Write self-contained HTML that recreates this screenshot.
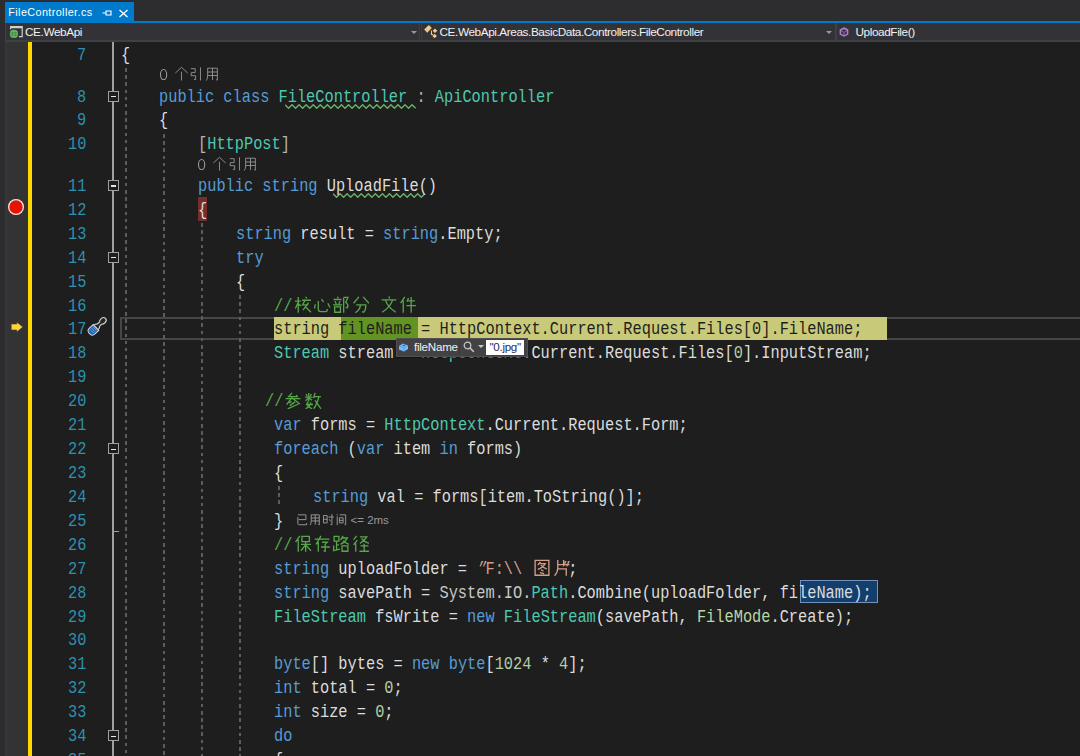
<!DOCTYPE html>
<html><head><meta charset="utf-8"><title>FileController.cs</title><style>
html,body{margin:0;padding:0}
body{width:1080px;height:756px;overflow:hidden;position:relative;background:#2d2d30}
.abs{position:absolute}
.code{font-family:"Liberation Mono",monospace;font-size:16px;line-height:20px;height:20px;white-space:pre;transform-origin:0 0;transform:scale(0.9575,1.13);color:#dcdcdc}
.guide{width:2px;background:repeating-linear-gradient(to bottom,#5c5c5c 0,#5c5c5c 3.6px,transparent 3.6px,transparent 7.176px)}
.obox{width:11px;height:11px;box-sizing:border-box;border:1.2px solid #a0a0a0;background:#1e1e1e}
.obox div{position:absolute;left:1.8px;top:4.3px;width:5.2px;height:1.2px;background:#e6e6e6}
.tabt{font-family:"Liberation Sans",sans-serif;font-size:10.8px;line-height:14px;color:#fff;white-space:pre;letter-spacing:0.4px}
.navt{font-family:"Liberation Sans",sans-serif;font-size:11.8px;line-height:14px;color:#f1f1f1;white-space:pre;letter-spacing:-0.42px}
.lens{font-family:"Liberation Mono",monospace;font-size:12px;line-height:14px;color:#999;white-space:pre;transform-origin:0 0;transform:scale(1.0,1.3)}
.tipt{font-family:"Liberation Sans",sans-serif;font-size:11.5px;line-height:14px;color:#999;white-space:pre}
.tipn{font-family:"Liberation Sans",sans-serif;font-size:11.6px;line-height:14px;color:#f1f1f1;white-space:pre;letter-spacing:-0.25px}
.tipv{font-family:"Liberation Sans",sans-serif;font-size:11.6px;line-height:14px;color:#2a2a60;white-space:pre;letter-spacing:-0.3px}
</style></head>
<body>
<div class="abs" style="left:0;top:0;width:1080px;height:42px;background:#2d2d30"></div>
<div class="abs" style="left:5px;top:2px;width:129px;height:20px;background:#007acc"></div>
<div class="abs" style="left:5px;top:21px;width:1075px;height:2px;background:#007acc"></div>
<div class="abs tabt" style="left:8.3px;top:5.2px">FileController.cs</div>
<svg class="abs" style="left:101px;top:8px" width="12" height="10" viewBox="0 0 12 10"><path d="M1.5 5H5M5 2.5V7.5M5 3H10V7H5" fill="none" stroke="#fff" stroke-width="1.1"/></svg>
<svg class="abs" style="left:118px;top:8.5px" width="11" height="9" viewBox="0 0 11 9"><path d="M1.5 1L9.5 8M9.5 1L1.5 8" stroke="#fff" stroke-width="1.3"/></svg>
<div class="abs" style="left:5px;top:23px;width:413px;height:17px;background:#333337;border-left:1px solid #3f3f46;border-right:1px solid #3f3f46"></div>
<div class="abs" style="left:421px;top:23px;width:413px;height:17px;background:#333337;border-left:1px solid #3f3f46;border-right:1px solid #3f3f46"></div>
<div class="abs" style="left:836px;top:23px;width:244px;height:17px;background:#333337;border-left:1px solid #3f3f46"></div>
<div class="abs" style="left:5px;top:40px;width:1075px;height:2px;background:#3f3f46"></div>
<svg class="abs" style="left:410.5px;top:31px" width="6" height="3" viewBox="0 0 6 3"><path d="M0 0H6L3 3Z" fill="#999"/></svg>
<svg class="abs" style="left:826px;top:31px" width="6" height="3" viewBox="0 0 6 3"><path d="M0 0H6L3 3Z" fill="#999"/></svg>
<svg class="abs" style="left:9px;top:25px" width="15" height="14" viewBox="0 0 15 14"><path d="M1 1.1H13.8V12.2H9.9V11H12.6V3.3H2.3V4.2H1Z" fill="#cfcfcf"/><circle cx="4.9" cy="8.9" r="4.1" fill="#6cc46c"/><path d="M1.2 7.9H8.6M1.2 10H8.6" stroke="#2f6f2f" stroke-width="0.7"/><ellipse cx="4.9" cy="8.9" rx="1.6" ry="4" fill="none" stroke="#3d8a3d" stroke-width="0.6"/></svg>
<div class="abs navt" style="left:25px;top:25px">CE.WebApi</div>
<svg class="abs" style="left:420px;top:22px" width="20" height="18" viewBox="0 0 20 18"><path d="M4.2 7.6L8.8 2.9L11.8 6L7.2 10.7Z" fill="#f0c98a"/><path d="M15 6.5L17.3 8.8L15 11.1L12.7 8.8Z M14.6 11.7L16.9 14L14.6 16.3L12.3 14Z" fill="#f0c98a"/><path d="M11.5 8.5V12.5H13" fill="none" stroke="#f0c98a" stroke-width="1.1"/></svg>
<div class="abs navt" style="left:439.5px;top:25px">CE.WebApi.Areas.BasicData.Controllers.FileController</div>
<svg class="abs" style="left:839px;top:26.5px" width="10" height="10" viewBox="0 0 10 10"><path d="M5 0.9L8.7 3V7L5 9.1L1.3 7V3Z" fill="#7e5a99" stroke="#b180d7" stroke-width="1.3"/><path d="M2.8 3.6L5 2.6L7.2 3.6L5 4.8Z" fill="#333337"/><path d="M2.2 4.6L4.3 5.6V8L2.2 6.8Z M7.8 4.6L5.7 5.6V8L7.8 6.8Z" fill="#3a3040"/></svg>
<div class="abs navt" style="left:855.5px;top:25px">UploadFile()</div>
<div class="abs" style="left:5px;top:42px;width:1075px;height:714px;background:#1e1e1e"></div>
<div class="abs" style="left:5px;top:42px;width:22.5px;height:714px;background:#333333"></div>
<div class="abs" style="left:5px;top:42px;width:1.5px;height:714px;background:#38383c"></div>
<div class="abs" style="left:27.8px;top:42px;width:4px;height:714px;background:#ffd800"></div>
<div class="abs" style="left:120px;top:317.24px;width:970px;height:22.72px;border:2px solid #464646;box-sizing:border-box"></div>
<div class="abs guide" style="left:125.20px;top:68.36px;height:687.64px"></div>
<div class="abs guide" style="left:163.00px;top:133.90px;height:622.10px"></div>
<div class="abs guide" style="left:201.40px;top:223.36px;height:532.64px"></div>
<div class="abs guide" style="left:239.30px;top:295.12px;height:460.88px"></div>
<div class="abs guide" style="left:278.00px;top:486.48px;height:21.52px"></div>
<div class="abs" style="left:112.4px;top:42px;width:1.7px;height:714px;background:#a0a0a0"></div>
<div class="abs obox" style="left:107.9px;top:90.72px"><div></div></div>
<div class="abs obox" style="left:107.9px;top:180.18px"><div></div></div>
<div class="abs obox" style="left:107.9px;top:251.94px"><div></div></div>
<div class="abs obox" style="left:107.9px;top:443.30px"><div></div></div>
<div class="abs obox" style="left:107.9px;top:730.34px"><div></div></div>
<div class="abs" style="left:113px;top:531.02px;width:5.5px;height:1.3px;background:#a0a0a0"></div>
<div class="abs" style="left:8.1px;top:198.9px;width:16.4px;height:16.4px;border-radius:50%;background:#e51400;box-shadow:inset 0 0 0 1.3px #e6e6e6"></div>
<svg class="abs" style="left:10px;top:320.5px" width="14" height="12" viewBox="0 0 14 12"><path d="M1.2 3H6.8V1L12.8 6L6.8 11V9H1.2Z" fill="#ffd43b" stroke="#3a3a30" stroke-width="0.6"/></svg>
<svg class="abs" style="left:84px;top:312px" width="30" height="30" viewBox="0 0 30 30"><g transform="translate(5.3,21.8) rotate(-43.5)"><path d="M9 -3.2 Q11.5 -3 12.8 -1.6 L15.5 -1.5 Q16.5 -2.8 19 -2.8 Q22.3 -2.8 22.3 0 Q22.3 2.8 19 2.8 Q16.5 2.8 15.5 1.5 L12.8 1.6 Q11.5 3 9 3.2Z" fill="#262626" stroke="#d4d4d4" stroke-width="1.15"/><path d="M0.3 0 Q0.3 -4 3.6 -4 H9.2 V4 H3.6 Q0.3 4 0.3 0Z" fill="#1a64b8" stroke="#d4d4d4" stroke-width="1.05"/><path d="M3.5 -2.6V2.6M5.6 -2.6V2.6M7.6 -2.6V2.6" stroke="#7fb2e8" stroke-width="0.8"/></g></svg>
<div class="abs" style="left:197.60px;top:197.04px;width:9.57px;height:23.92px;background:#772d2e"></div>
<div class="abs" style="left:274.20px;top:316.94px;width:612.80px;height:23.32px;background:#c9ca79"></div>
<div class="abs" style="left:341.23px;top:316.94px;width:76.60px;height:23.32px;background:#639323"></div>
<div class="abs" style="left:799.82px;top:580.26px;width:78.10px;height:22.92px;background:#133f6f;border:1px solid #7391bb;box-sizing:border-box"></div>
<svg class="abs" style="left:284.77px;top:103.96px" width="135.1" height="5" viewBox="0 -0.7 135.1 5"><polyline points="0.00,0.00 3.53,3.60 7.06,0.00 10.59,3.60 14.12,0.00 17.65,3.60 21.18,0.00 24.71,3.60 28.24,0.00 31.77,3.60 35.30,0.00 38.83,3.60 42.36,0.00 45.89,3.60 49.42,0.00 52.95,3.60 56.48,0.00 60.01,3.60 63.54,0.00 67.07,3.60 70.60,0.00 74.13,3.60 77.66,0.00 81.19,3.60 84.72,0.00 88.25,3.60 91.78,0.00 95.31,3.60 98.84,0.00 102.37,3.60 105.90,0.00 109.43,3.60 112.96,0.00 116.49,3.60 120.02,0.00 123.55,3.60 127.08,0.00 130.61,3.60" fill="none" stroke="#6bb36b" stroke-width="1.3"/></svg>
<svg class="abs" style="left:332.65px;top:193.42px" width="96.8" height="5" viewBox="0 -0.7 96.8 5"><polyline points="0.00,0.00 3.53,3.60 7.06,0.00 10.59,3.60 14.12,0.00 17.65,3.60 21.18,0.00 24.71,3.60 28.24,0.00 31.77,3.60 35.30,0.00 38.83,3.60 42.36,0.00 45.89,3.60 49.42,0.00 52.95,3.60 56.48,0.00 60.01,3.60 63.54,0.00 67.07,3.60 70.60,0.00 74.13,3.60 77.66,0.00 81.19,3.60 84.72,0.00 88.25,3.60 91.78,0.00" fill="none" stroke="#6bb36b" stroke-width="1.3"/></svg>
<div class="abs code" style="left:77.42px;top:43.88px;color:#2b91af">7</div>
<div class="abs code" style="left:77.42px;top:85.50px;color:#2b91af">8</div>
<div class="abs code" style="left:77.42px;top:109.42px;color:#2b91af">9</div>
<div class="abs code" style="left:67.85px;top:133.34px;color:#2b91af">10</div>
<div class="abs code" style="left:67.85px;top:174.96px;color:#2b91af">11</div>
<div class="abs code" style="left:67.85px;top:198.88px;color:#2b91af">12</div>
<div class="abs code" style="left:67.85px;top:222.80px;color:#2b91af">13</div>
<div class="abs code" style="left:67.85px;top:246.72px;color:#2b91af">14</div>
<div class="abs code" style="left:67.85px;top:270.64px;color:#2b91af">15</div>
<div class="abs code" style="left:67.85px;top:294.56px;color:#2b91af">16</div>
<div class="abs code" style="left:67.85px;top:318.48px;color:#2b91af">17</div>
<div class="abs code" style="left:67.85px;top:342.40px;color:#2b91af">18</div>
<div class="abs code" style="left:67.85px;top:366.32px;color:#2b91af">19</div>
<div class="abs code" style="left:67.85px;top:390.24px;color:#2b91af">20</div>
<div class="abs code" style="left:67.85px;top:414.16px;color:#2b91af">21</div>
<div class="abs code" style="left:67.85px;top:438.08px;color:#2b91af">22</div>
<div class="abs code" style="left:67.85px;top:462.00px;color:#2b91af">23</div>
<div class="abs code" style="left:67.85px;top:485.92px;color:#2b91af">24</div>
<div class="abs code" style="left:67.85px;top:509.84px;color:#2b91af">25</div>
<div class="abs code" style="left:67.85px;top:533.76px;color:#2b91af">26</div>
<div class="abs code" style="left:67.85px;top:557.68px;color:#2b91af">27</div>
<div class="abs code" style="left:67.85px;top:581.60px;color:#2b91af">28</div>
<div class="abs code" style="left:67.85px;top:605.52px;color:#2b91af">29</div>
<div class="abs code" style="left:67.85px;top:629.44px;color:#2b91af">30</div>
<div class="abs code" style="left:67.85px;top:653.36px;color:#2b91af">31</div>
<div class="abs code" style="left:67.85px;top:677.28px;color:#2b91af">32</div>
<div class="abs code" style="left:67.85px;top:701.20px;color:#2b91af">33</div>
<div class="abs code" style="left:67.85px;top:725.12px;color:#2b91af">34</div>
<div class="abs code" style="left:67.85px;top:749.04px;color:#2b91af">35</div>
<div class="abs code" style="left:121.00px;top:43.88px"><span style="color:#dcdcdc">{</span></div>
<div class="abs code" style="left:159.30px;top:85.50px"><span style="color:#569cd6">public</span><span style="color:#dcdcdc"> </span><span style="color:#569cd6">class</span><span style="color:#dcdcdc"> </span><span style="color:#4ec9b0">FileController</span><span style="color:#b4b4b4"> : </span><span style="color:#4ec9b0">ApiController</span></div>
<div class="abs code" style="left:159.30px;top:109.42px"><span style="color:#dcdcdc">{</span></div>
<div class="abs code" style="left:197.60px;top:133.34px"><span style="color:#b4b4b4">[</span><span style="color:#4ec9b0">HttpPost</span><span style="color:#b4b4b4">]</span></div>
<div class="abs code" style="left:197.60px;top:174.96px"><span style="color:#569cd6">public</span><span style="color:#dcdcdc"> </span><span style="color:#569cd6">string</span><span style="color:#dcdcdc"> </span><span style="color:#dcdcdc">UploadFile</span><span style="color:#dcdcdc">()</span></div>
<div class="abs code" style="left:197.60px;top:198.88px"><span style="color:#dcdcdc">{</span></div>
<div class="abs code" style="left:235.90px;top:222.80px"><span style="color:#569cd6">string</span><span style="color:#dcdcdc"> result = </span><span style="color:#569cd6">string</span><span style="color:#dcdcdc">.Empty;</span></div>
<div class="abs code" style="left:235.90px;top:246.72px"><span style="color:#569cd6">try</span></div>
<div class="abs code" style="left:235.90px;top:270.64px"><span style="color:#dcdcdc">{</span></div>
<div class="abs code" style="left:274.20px;top:294.56px"><span style="color:#57a64a">//             </span></div>
<div class="abs code" style="left:274.20px;top:318.48px"><span style="color:#1e1e1e">string fileName = HttpContext.Current.Request.Files[0].FileName;</span></div>
<div class="abs code" style="left:274.20px;top:342.40px"><span style="color:#4ec9b0">Stream</span><span style="color:#dcdcdc"> stream = </span><span style="color:#4ec9b0">HttpContext</span><span style="color:#dcdcdc">.Current.Request.Files[</span><span style="color:#b5cea8">0</span><span style="color:#dcdcdc">].InputStream;</span></div>
<div class="abs code" style="left:264.62px;top:390.24px"><span style="color:#57a64a">//    </span></div>
<div class="abs code" style="left:274.20px;top:414.16px"><span style="color:#569cd6">var</span><span style="color:#dcdcdc"> forms = </span><span style="color:#4ec9b0">HttpContext</span><span style="color:#dcdcdc">.Current.Request.Form;</span></div>
<div class="abs code" style="left:274.20px;top:438.08px"><span style="color:#569cd6">foreach</span><span style="color:#dcdcdc"> (</span><span style="color:#569cd6">var</span><span style="color:#dcdcdc"> item </span><span style="color:#569cd6">in</span><span style="color:#dcdcdc"> forms)</span></div>
<div class="abs code" style="left:274.20px;top:462.00px"><span style="color:#dcdcdc">{</span></div>
<div class="abs code" style="left:312.50px;top:485.92px"><span style="color:#569cd6">string</span><span style="color:#dcdcdc"> val = forms[item.ToString()];</span></div>
<div class="abs code" style="left:274.20px;top:509.84px"><span style="color:#dcdcdc">}</span></div>
<div class="abs code" style="left:274.20px;top:533.76px"><span style="color:#57a64a">//        </span></div>
<div class="abs code" style="left:274.20px;top:557.68px"><span style="color:#569cd6">string</span><span style="color:#dcdcdc"> uploadFolder = </span><span style="color:#d69d85"><span style="display:inline-block;transform:skewX(-25deg)">"</span>F:\\    <span style="display:inline-block;transform:skewX(-25deg)">"</span></span><span style="color:#dcdcdc">;</span></div>
<div class="abs code" style="left:274.20px;top:581.60px"><span style="color:#569cd6">string</span><span style="color:#dcdcdc"> savePath = </span><span style="color:#c8c8c8">System.IO.</span><span style="color:#4ec9b0">Path</span><span style="color:#dcdcdc">.Combine(uploadFolder, fileName);</span></div>
<div class="abs code" style="left:274.20px;top:605.52px"><span style="color:#4ec9b0">FileStream</span><span style="color:#dcdcdc"> fsWrite = </span><span style="color:#569cd6">new</span><span style="color:#dcdcdc"> </span><span style="color:#4ec9b0">FileStream</span><span style="color:#dcdcdc">(savePath, </span><span style="color:#b8d7a3">FileMode</span><span style="color:#dcdcdc">.Create);</span></div>
<div class="abs code" style="left:274.20px;top:653.36px"><span style="color:#569cd6">byte</span><span style="color:#dcdcdc">[] bytes = </span><span style="color:#569cd6">new</span><span style="color:#dcdcdc"> </span><span style="color:#569cd6">byte</span><span style="color:#dcdcdc">[</span><span style="color:#b5cea8">1024</span><span style="color:#dcdcdc"> * </span><span style="color:#b5cea8">4</span><span style="color:#dcdcdc">];</span></div>
<div class="abs code" style="left:274.20px;top:677.28px"><span style="color:#569cd6">int</span><span style="color:#dcdcdc"> total = </span><span style="color:#b5cea8">0</span><span style="color:#dcdcdc">;</span></div>
<div class="abs code" style="left:274.20px;top:701.20px"><span style="color:#569cd6">int</span><span style="color:#dcdcdc"> size = </span><span style="color:#b5cea8">0</span><span style="color:#dcdcdc">;</span></div>
<div class="abs code" style="left:274.20px;top:725.12px"><span style="color:#569cd6">do</span></div>
<div class="abs code" style="left:274.20px;top:749.04px"><span style="color:#dcdcdc">{</span></div>
<svg class="abs" style="left:158.80px;top:66.06px" width="10" height="14"><ellipse cx="4.6" cy="8.6" rx="3.1" ry="5.1" fill="none" stroke="#999" stroke-width="1.1"/></svg>
<svg class="abs" style="left:197.10px;top:155.52px" width="10" height="14"><ellipse cx="4.6" cy="8.6" rx="3.1" ry="5.1" fill="none" stroke="#999" stroke-width="1.1"/></svg>
<div class="abs tipt" style="left:350.5px;top:512.50px">&lt;= 2ms</div>
<svg class="abs" style="left:294.05px;top:295.02px" width="18" height="18.6" viewBox="-0.5 -0.5 17 17"><path d="M0.5 5H6M3.5 1V16M3.5 6L0.8 12M3.5 7.5L6 9.5M10.5 1L11.5 2.5M7 4.2H15.5M10 4.2L7.5 8.5H13M13.2 6.5L8 13.5M10.5 10.5L15.5 15.5" stroke="#57a64a" stroke-width="1.25" fill="none"/></svg>
<svg class="abs" style="left:313.20px;top:295.02px" width="18" height="18.6" viewBox="-0.5 -0.5 17 17"><path d="M1.8 8L0.8 12M4.5 5V13Q4.5 15 7 15H11.5Q13 15 13 12.5M7.5 3L9.5 6M13.5 7L15.5 11" stroke="#57a64a" stroke-width="1.25" fill="none"/></svg>
<svg class="abs" style="left:332.35px;top:295.02px" width="18" height="18.6" viewBox="-0.5 -0.5 17 17"><path d="M4.8 0.8L5.2 2.5M1 3.5H8.5M2.5 5L3.5 8M7 5L6 8M0.5 8.5H9M2 10.5V15.5H7.5V10.5Z M10.5 1.5V16M10.5 1.5H14.5L12.5 6Q15.5 8.5 14 11.2L12.5 11" stroke="#57a64a" stroke-width="1.25" fill="none"/></svg>
<svg class="abs" style="left:351.50px;top:295.02px" width="18" height="18.6" viewBox="-0.5 -0.5 17 17"><path d="M6 1L1 7M10 1L15.5 7M3.5 8.5H12.5Q12.5 14 10.5 15.5L9 15M7.5 8.5Q7 13.5 2.5 16" stroke="#57a64a" stroke-width="1.25" fill="none"/></svg>
<svg class="abs" style="left:380.22px;top:295.02px" width="18" height="18.6" viewBox="-0.5 -0.5 17 17"><path d="M8 0.5L8.5 2.5M1 3.8H15M4.5 3.8Q7 11 14.5 15.5M11.5 3.8Q9 11 1.5 15.5" stroke="#57a64a" stroke-width="1.25" fill="none"/></svg>
<svg class="abs" style="left:399.37px;top:295.02px" width="18" height="18.6" viewBox="-0.5 -0.5 17 17"><path d="M5 1L1 7M3.5 4.5V16M8.5 2L7 5.5M7.5 4.8H14.5M6.5 9.2H15.5M11 1V16" stroke="#57a64a" stroke-width="1.25" fill="none"/></svg>
<svg class="abs" style="left:284.47px;top:390.70px" width="18" height="18.6" viewBox="-0.5 -0.5 17 17"><path d="M7 1L4 4.5H12L11 3M1 6.5H15M8 4L2 12M8 6.5L14.5 11.5M6.5 9L4.5 10.5M10 9.5L5 13M13 11.5L3 16" stroke="#57a64a" stroke-width="1.25" fill="none"/></svg>
<svg class="abs" style="left:303.62px;top:390.70px" width="18" height="18.6" viewBox="-0.5 -0.5 17 17"><path d="M1.5 2L2.5 4M6.5 2L5.5 4M0.5 5H7.5M4 1V9M4 5.5L1 8.5M4 5.5L7 8M3.5 9L2 12H8M6 10Q5 14 1 16M2.5 13L7 16M10 1L8.5 6M9 4.5H15.5M13.5 4.5Q12 12 8.5 16M10 8L15.5 16" stroke="#57a64a" stroke-width="1.25" fill="none"/></svg>
<svg class="abs" style="left:294.05px;top:534.22px" width="18" height="18.6" viewBox="-0.5 -0.5 17 17"><path d="M5 1L1 7M3.5 4.5V16M7 1.5H14V6.5H7ZM6 9H15.5M10.5 6.5V16M10.5 9.5L6 15M10.5 9.5L15.5 15" stroke="#57a64a" stroke-width="1.25" fill="none"/></svg>
<svg class="abs" style="left:313.20px;top:534.22px" width="18" height="18.6" viewBox="-0.5 -0.5 17 17"><path d="M1 4H15M7 1L2.5 9M4.5 7V16M8 7H13L10.5 9.5M11 9.5V15.5L9.5 15M7 11.5H15.5" stroke="#57a64a" stroke-width="1.25" fill="none"/></svg>
<svg class="abs" style="left:332.35px;top:534.22px" width="18" height="18.6" viewBox="-0.5 -0.5 17 17"><path d="M1.5 1.5H6V6H1.5ZM3.8 6V14M3.8 9.5H6M1 10V15L7 13.5M10 1L7.5 5M9 3H14Q12 7 7.5 9M10 5.5Q12 8 15.5 9M9 10.5V15.5H14.5V10.5Z" stroke="#57a64a" stroke-width="1.25" fill="none"/></svg>
<svg class="abs" style="left:351.50px;top:534.22px" width="18" height="18.6" viewBox="-0.5 -0.5 17 17"><path d="M4 1L1 4.5M4.5 5L1 9.5M3 8V16M7 2H13.5Q11 6 7 8M8.5 3.5Q11 6.5 15.5 8M7.5 10.5H15M11 8.5V15M6.5 15.5H15.5" stroke="#57a64a" stroke-width="1.25" fill="none"/></svg>
<svg class="abs" style="left:533.42px;top:558.14px" width="18" height="18.6" viewBox="-0.5 -0.5 17 17"><path d="M1.5 1.5H14.5V15.5H1.5ZM6.5 3L4 6M6 4.5H11Q9 8 4 10M7 6Q9 8.5 12.5 9.5M7 10.5L9.5 11.5M6 13L10 14" stroke="#d69d85" stroke-width="1.25" fill="none"/></svg>
<svg class="abs" style="left:552.58px;top:558.14px" width="18" height="18.6" viewBox="-0.5 -0.5 17 17"><path d="M4 1V9Q4 13 1 16M4 5.5H15M9.5 1V5.5M4 9.5H12V16" stroke="#d69d85" stroke-width="1.25" fill="none"/></svg>
<svg class="abs" style="left:174.10px;top:66.06px" width="15" height="15" viewBox="-0.5 -0.5 17 17"><path d="M8 1L1 7.5M8 1L15 7.5M8 6V16" stroke="#999999" stroke-width="1.0" fill="none"/></svg>
<svg class="abs" style="left:189.30px;top:66.06px" width="15" height="15" viewBox="-0.5 -0.5 17 17"><path d="M1.5 2.5H6.5V7H2.2L1.8 10.5H7V15L5 14.5M12.5 1V16" stroke="#999999" stroke-width="1.0" fill="none"/></svg>
<svg class="abs" style="left:204.50px;top:66.06px" width="15" height="15" viewBox="-0.5 -0.5 17 17"><path d="M2.5 2V10Q2.5 14 1 16M2.5 2H13.5V15.5L12 15M2.5 6.3H13.5M2.5 10.3H13.5M8 2V15.5" stroke="#999999" stroke-width="1.0" fill="none"/></svg>
<svg class="abs" style="left:212.40px;top:155.52px" width="15" height="15" viewBox="-0.5 -0.5 17 17"><path d="M8 1L1 7.5M8 1L15 7.5M8 6V16" stroke="#999999" stroke-width="1.0" fill="none"/></svg>
<svg class="abs" style="left:227.60px;top:155.52px" width="15" height="15" viewBox="-0.5 -0.5 17 17"><path d="M1.5 2.5H6.5V7H2.2L1.8 10.5H7V15L5 14.5M12.5 1V16" stroke="#999999" stroke-width="1.0" fill="none"/></svg>
<svg class="abs" style="left:242.80px;top:155.52px" width="15" height="15" viewBox="-0.5 -0.5 17 17"><path d="M2.5 2V10Q2.5 14 1 16M2.5 2H13.5V15.5L12 15M2.5 6.3H13.5M2.5 10.3H13.5M8 2V15.5" stroke="#999999" stroke-width="1.0" fill="none"/></svg>
<svg class="abs" style="left:295.90px;top:513.20px" width="12.5" height="12.5" viewBox="-0.5 -0.5 17 17"><path d="M2 2H13V8.5H3M2 5V14Q2 15.5 4 15.5H14V13" stroke="#999999" stroke-width="1.3" fill="none"/></svg>
<svg class="abs" style="left:309.00px;top:513.20px" width="12.5" height="12.5" viewBox="-0.5 -0.5 17 17"><path d="M2.5 2V10Q2.5 14 1 16M2.5 2H13.5V15.5L12 15M2.5 6.3H13.5M2.5 10.3H13.5M8 2V15.5" stroke="#999999" stroke-width="1.3" fill="none"/></svg>
<svg class="abs" style="left:322.10px;top:513.20px" width="12.5" height="12.5" viewBox="-0.5 -0.5 17 17"><path d="M1.5 3V13H6.5V3ZM1.5 8H6.5M8 5H15.5M13 1V15.5L11 15M9.5 8L11 11" stroke="#999999" stroke-width="1.3" fill="none"/></svg>
<svg class="abs" style="left:335.20px;top:513.20px" width="12.5" height="12.5" viewBox="-0.5 -0.5 17 17"><path d="M2 1L3 2.5M2.5 4V16M6 2H14V15.5L12.5 15M5.5 6V13H10.5V6ZM5.5 9.5H10.5" stroke="#999999" stroke-width="1.3" fill="none"/></svg>
<div class="abs" style="left:395.9px;top:338.1px;width:132.4px;height:19px;background:#424245;border:1px solid #4f4f54;box-sizing:border-box;box-shadow:0 1px 1px rgba(0,0,0,.35)"></div>
<svg class="abs" style="left:397.5px;top:341.5px" width="11" height="10" viewBox="0 0 11 10"><path d="M1 4L5 1.5L10 3.5V7L6 9.5L1 7.5Z" fill="#75beff"/><path d="M1 4L6 6L10 3.5M6 6V9.5" fill="none" stroke="#4a8ad0" stroke-width="0.7"/><path d="M4.2 3.5L6.3 2.5L7.8 3.2L5.7 4.2Z" fill="#2d5e94"/></svg>
<div class="abs tipn" style="left:414px;top:339.5px">fileName</div>
<div class="abs" style="left:459.3px;top:340px;width:1px;height:15px;background:#37373a"></div>
<svg class="abs" style="left:462.5px;top:340.8px" width="12" height="12" viewBox="0 0 12 12"><circle cx="4.5" cy="4.5" r="3.3" fill="none" stroke="#c8c8c8" stroke-width="1.2"/><path d="M7 7L10.8 10.8" stroke="#c8c8c8" stroke-width="1.6"/></svg>
<svg class="abs" style="left:477.5px;top:345px" width="6" height="3" viewBox="0 0 6 3"><path d="M0 0H6L3 3Z" fill="#c8c8c8"/></svg>
<div class="abs" style="left:486.1px;top:339.9px;width:38.2px;height:15.2px;background:#ffffff"></div>
<div class="abs tipv" style="left:489.5px;top:339.8px">"0.jpg"</div>
</body></html>
